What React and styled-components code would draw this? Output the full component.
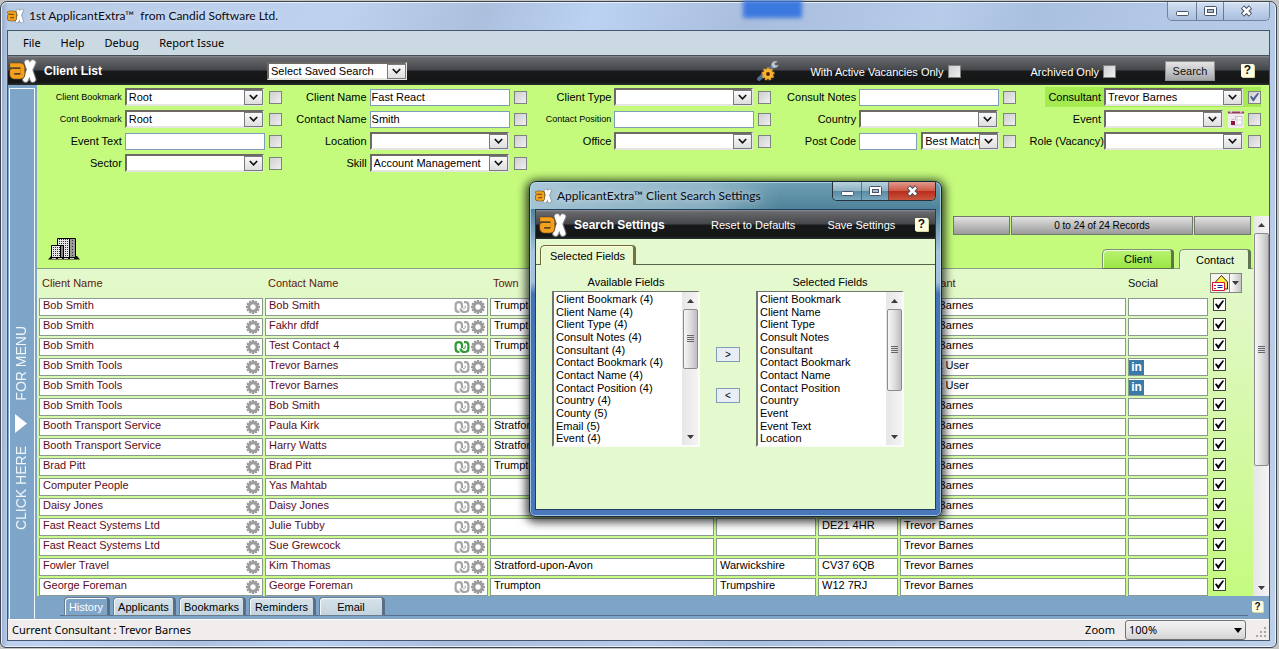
import React from "react";
import styled, { createGlobalStyle, css } from "styled-components";

const GlobalStyle = createGlobalStyle`
  *, *::before, *::after { box-sizing: border-box; }
  body {
    margin: 0;
    background: #c3c5c4;
    font-family: "Liberation Sans", Arial, sans-serif;
    font-size: 11px;
    line-height: 14px;
    color: #000;
  }
  button, input, select { font: inherit; color: inherit; margin: 0; }
`;

const uiFont = css`
  font-family: "Noto Sans", "Open Sans", sans-serif;
  font-size: 11px;
`;

const Desktop = styled.div`
  position: relative;
  height: 100vh;
  padding: 1px 2px 1px 0;
  overflow: hidden;
`;

const AppWindow = styled.div`
  height: 100%;
  display: flex;
  flex-direction: column;
  padding: 0 6px 6px;
  border: 1px solid #3f4650;
  border-radius: 7px 7px 6px 6px;
  box-shadow: inset 0 0 0 1px #e6effa;
  background:
    linear-gradient(90deg, rgba(64, 84, 130, 0.25) 1px, transparent 7px),
    linear-gradient(115deg, #b7cbe6 0, #bed2f0 22%, #acc0de 31%, #bcd2f2 38%, #a9bddd 48%, #b6cce9 60%, #aac0df 66%, #b3c8e6 74%, #bdd0ea 100%);
`;

const TitleBar = styled.header`
  position: relative;
  display: flex;
  align-items: center;
  flex: none;
  height: ${(p) => p.$height}px;
  gap: 5px;
`;

const TitleText = styled.h1`
  margin: 0;
  font-family: Lato, "Open Sans", sans-serif;
  font-size: 12px;
  line-height: 18px;
  font-weight: 400;
  color: #0a0a14;
  white-space: pre;
  text-shadow: 0 0 6px rgba(255, 255, 255, 0.8);
`;

const TitleGlow = styled.div`
  position: absolute;
  left: 736px;
  top: -2px;
  width: 59px;
  height: 18px;
  background: #3c79de;
  filter: blur(2px);
`;

const CaptionGroup = styled.div`
  display: flex;
  align-self: flex-start;
  margin-left: auto;
  height: 19px;
  border: 1px solid ${(p) => (p.$dark ? "#26313d" : "#74839a")};
  border-top: 0;
  border-radius: 0 0 5px 5px;
  overflow: hidden;
`;

const CaptionButton = styled.button`
  display: flex;
  align-items: center;
  justify-content: center;
  width: ${(p) => p.$width}px;
  padding: 0;
  border: 0;
  border-left: ${(p) => (p.$first ? "0" : "1px solid rgba(50, 65, 90, 0.6)")};
  background: ${(p) =>
    p.$kind === "close"
      ? "linear-gradient(#dd9a8c, #cf5a48 48%, #b92d1b 52%, #c9543c)"
      : p.$kind === "teal"
        ? "linear-gradient(#b9d2de, #8fb3c4 48%, #5c8ca5 52%, #78a8bd)"
        : "linear-gradient(rgba(235,242,252,.6), rgba(200,216,236,.5) 48%, rgba(160,182,214,.5))"};
`;

const Client = styled.div`
  flex: 1;
  min-height: 0;
  display: flex;
  flex-direction: column;
  border: 1px solid #46566e;
  background: #fff;
`;

const MenuBar = styled.nav`
  ${uiFont}
  display: flex;
  align-items: center;
  flex: none;
  height: 25px;
  gap: 20px;
  padding-left: 15px;
  background: #cbd9e2;
  border-bottom: 1px solid #4a5058;
`;

const MenuItem = styled.button`
  padding: 0;
  border: 0;
  background: none;
  line-height: 18px;
`;

const BlackBar = styled.div`
  display: flex;
  align-items: center;
  flex: none;
  height: 29px;
  padding: 0 ${(p) => p.$end}px 0 ${(p) => p.$start || 0}px;
  color: #fff;
  background: linear-gradient(#8b8c90 0, #66686c 2px, #45474b 48%, #17191b 52%, #141616 90%, #2c3030);
`;

const BarTitle = styled.h2`
  margin: 0 0 0 6px;
  width: ${(p) => p.$width}px;
  font-size: 12px;
  line-height: 14px;
  font-weight: 700;
`;

const Spacer = styled.div`
  flex: ${(p) => (p.$size ? `0 0 ${p.$size}px` : 1)};
`;

const IconButton = styled.button`
  display: flex;
  padding: 0;
  border: 0;
  background: none;
`;

const BarCheck = styled.label`
  display: flex;
  align-items: center;
  gap: 4px;
  padding-top: 2px;
  margin-right: ${(p) => p.$after}px;
`;

const SearchButton = styled.button`
  width: 50px;
  height: 20px;
  padding: 0;
  border: 1px solid #8f9192;
  color: #111;
  background: linear-gradient(#e4e4e4, #c6c7c8 50%, #a4a5a6);
`;

const Box = styled.input.attrs({ type: "checkbox" })`
  appearance: none;
  display: block;
  flex: none;
  width: 13px;
  height: 13px;
  border: 1px solid ${(p) => (p.$strong ? "#3d443a" : "#7d8480")};
  background: ${(p) => (p.$strong ? "#fff" : "linear-gradient(135deg, #cfcfd2, #efefef)")};

  &:checked::before {
    content: "";
    display: block;
    width: 9px;
    height: 9px;
    margin: 1px;
    background: ${(p) => (p.$strong ? "#080810" : "#4a5f97")};
    clip-path: polygon(0 48%, 14% 36%, 36% 62%, 88% 0, 100% 10%, 40% 100%, 30% 94%);
  }
`;

const ComboWrap = styled.span`
  position: relative;
  display: block;
  flex: none;
  width: ${(p) => p.$width || 139}px;
  height: 18px;
`;

const ComboSelect = styled.select`
  appearance: none;
  display: block;
  width: 100%;
  height: 18px;
  padding: 0 18px 0 2px;
  border: 2px solid;
  border-color: #6d6a66 #e6e6e0 #e6e6e0 #6d6a66;
  border-radius: 0;
  color: #000;
  background: #fff;
  line-height: 14px;
`;

const ComboArrow = styled.span`
  position: absolute;
  top: 2px;
  right: 1px;
  display: flex;
  align-items: center;
  justify-content: center;
  width: 19px;
  height: 15px;
  border: 1px solid #777b80;
  background: linear-gradient(#fafafa, #dedede);
  pointer-events: none;
`;

const Workspace = styled.div`
  flex: 1;
  min-height: 0;
  display: flex;
`;

const SideStrip = styled.aside`
  flex: none;
  width: 29px;
  padding: 3px 2px 0 1px;
  background: #7ea5c7;
`;

const SideButton = styled.button`
  display: flex;
  flex-direction: column;
  align-items: center;
  justify-content: center;
  gap: 13px;
  width: 100%;
  height: 100%;
  padding: 148px 3px 0 0;
  border: 1px solid #f2f7fb;
  border-bottom: 0;
  background: #7ea5c7;
  color: #eef5fb;
`;

const SideText = styled.span`
  writing-mode: vertical-rl;
  transform: rotate(180deg);
  font-size: 14px;
  line-height: 16px;
`;

const Pane = styled.main`
  flex: 1;
  min-width: 0;
  display: flex;
  flex-direction: column;
  background: #c4fb7d;
`;

const SearchForm = styled.form`
  display: grid;
  grid-template-columns: repeat(5, 1fr);
  align-items: start;
  flex: none;
  height: 131px;
  padding: 2px 8px 0 0;
`;

const FormColumn = styled.div`
  display: flex;
  flex-direction: column;
  gap: 2px;
`;

const FieldRow = styled.div`
  display: flex;
  align-items: center;
  justify-content: flex-end;
  height: 20px;
`;

const FieldLabel = styled.label`
  margin-right: ${(p) => (p.$tight ? 0 : 3)}px;
  font-size: ${(p) => (p.$small ? 9 : 11)}px;
  white-space: nowrap;
`;

const FieldSlot = styled.div`
  display: flex;
  align-items: center;
  justify-content: space-between;
  width: 140px;
  margin-right: 4px;
`;

const Highlight = styled.div`
  display: flex;
  align-items: center;
  align-self: flex-end;
  height: 20px;
  padding-left: 3px;
  background: #a4ea50;
`;

const TextField = styled.input`
  width: ${(p) => p.$width || 140}px;
  height: 17px;
  padding: 0 1px;
  border: 1px solid #7f9db9;
  background: #fff;
`;

const Body = styled.div`
  flex: 1;
  min-height: 0;
  display: flex;
`;

const ListArea = styled.section`
  flex: 1;
  min-width: 0;
  display: flex;
  flex-direction: column;
`;

const ListTools = styled.div`
  display: flex;
  justify-content: space-between;
  flex: none;
  height: 53px;
  padding: 0 2px 0 11px;
  border-bottom: 1px solid #8c9d86;
`;

const BuildingSlot = styled.div`
  align-self: flex-end;
  padding-bottom: 8px;
  line-height: 0;
`;

const ToolsRight = styled.div`
  display: flex;
  flex-direction: column;
  justify-content: space-between;
  align-items: flex-end;
`;

const RecordNav = styled.div`
  display: flex;
  gap: 1px;
`;

const RecordButton = styled.button`
  width: ${(p) => p.$width}px;
  height: 19px;
  padding: 0;
  border: 1px solid #6f7a68;
  font-size: 10px;
  background: linear-gradient(#e2e2e2, #bdbdbd 50%, #9b9b9b);
`;

const Tabs = styled.div`
  display: flex;
  gap: 5px;
`;

const ListTab = styled.button`
  width: 72px;
  height: 20px;
  margin-bottom: -1px;
  padding: 0 0 0 2px;
  border: 1px solid #7d8f74;
  border-right: 3px solid #5f7452;
  border-bottom: ${(p) => (p.$active ? "0" : "1px solid #5f7452")};
  border-radius: 5px 4px 0 0;
  background: ${(p) => (p.$active ? "#e3f9cb" : "linear-gradient(#b9f373, #9be644)")};
  box-shadow: inset 1px 1px 0 #eefbe0;
`;

const TableClip = styled.div`
  flex: 1;
  min-height: 0;
  overflow: hidden;
  background: linear-gradient(#e3f9cc, #e0f8c4 40px, #c5fb80);
`;

const DataTable = styled.table`
  width: 100%;
  table-layout: fixed;
  border-collapse: separate;
  border-spacing: 2px;
`;

const HeadCell = styled.th`
  width: ${(p) => (p.$width ? p.$width + "px" : "auto")};
  height: 25px;
  padding: 0 0 2px ${(p) => (p.$plain ? 0 : 3)}px;
  text-align: left;
  font-weight: 400;
  color: ${(p) => (p.$plain ? "#111" : "#60170f")};
`;

const IconHead = styled.th`
  width: 41px;
  padding: 0 0 2px;
`;

const MailMenu = styled.button`
  display: flex;
  align-items: center;
  width: 32px;
  height: 20px;
  padding: 0;
  border: 1px solid #85877c;
  background: #f4f4ec;
`;

const MailArrow = styled.span`
  display: flex;
  align-items: center;
  justify-content: center;
  width: 12px;
  height: 18px;
  border-left: 1px solid #85877c;
  background: linear-gradient(90deg, #fff, #c4c4c4);
`;

const Cell = styled.td`
  height: 18px;
  padding: 0;
  border: 1px solid #8b9a91;
  background: #fff;
  color: ${(p) => (p.$link ? "#5b0b22" : "#000")};
`;

const CellLine = styled.div`
  display: flex;
  align-items: flex-start;
  height: 16px;
  padding: 0 1px 0 3px;
  white-space: nowrap;
`;

const CellText = styled.span`
  flex: 1;
  overflow: hidden;
  height: 14px;
  line-height: 12px;
`;

const CheckCell = styled.td`
  padding: 0 0 0 3px;
  vertical-align: top;
`;

const LinkedIn = styled.a`
  display: block;
  width: 15px;
  height: 15px;
  margin-top: 1px;
  background: #3a7aa8;
  color: #fff;
  font-size: 12px;
  line-height: 15px;
  font-weight: 700;
  text-align: center;
  text-decoration: none;
`;

const Track = styled.div`
  flex: none;
  display: flex;
  flex-direction: column;
  align-items: center;
  width: ${(p) => p.$width}px;
  background: linear-gradient(90deg, #e6e6e6, #f4f4f4);
`;

const TrackEnd = styled.span`
  display: flex;
  align-items: center;
  justify-content: center;
  flex: none;
  width: 100%;
  height: 17px;
`;

const Thumb = styled.span`
  display: flex;
  align-items: center;
  justify-content: center;
  width: calc(100% - 1px);
  height: ${(p) => p.$size};
  margin-bottom: auto;
  border: 1px solid #8c8c90;
  border-radius: 2px;
  background: linear-gradient(90deg, #f6f6f6, #dededf 50%, #bdbdc2);
`;

const BottomBar = styled.div`
  flex: none;
  height: 23px;
  display: flex;
  align-items: flex-start;
  padding-right: 6px;
  background: #7ea5c7;
`;

const BottomTabs = styled.div`
  flex: 1;
  display: flex;
  gap: 3px;
  height: 20px;
  margin: 0 4px 0 23px;
  padding: 1px 0 0 4px;
  border-bottom: 1px solid #55708c;
`;

const BottomTab = styled.button`
  width: ${(p) => p.$width}px;
  height: 19px;
  padding: 1px 0 0;
  border: 1px solid #6a7c8e;
  border-right: 3px solid #5b6f84;
  border-radius: 4px 4px 0 0;
  box-shadow: inset 1px 1px 0 #f2f7fa;
  color: ${(p) => (p.$active ? "#fff" : "#000")};
  background: ${(p) => (p.$active ? "#7ea5c7" : "linear-gradient(#d7e3ea, #c3d3de)")};
`;

const HelpSlot = styled.div`
  padding-top: 5px;
`;

const StatusBar = styled.footer`
  ${uiFont}
  flex: none;
  display: flex;
  align-items: center;
  height: 21px;
  padding: 0 2px 0 4px;
  border-top: 1px solid #fff;
  background: #f0edec;
`;

const ZoomLabel = styled.label`
  margin-left: auto;
  margin-right: 10px;
`;

const ZoomSelect = styled.select`
  appearance: none;
  width: 121px;
  height: 20px;
  padding: 0 3px;
  border: 1px solid #6f7276;
  border-radius: 3px;
  background: linear-gradient(#f3f3f3, #e6e6e6 50%, #d3d3d3);
`;

const ZoomWrap = styled.span`
  position: relative;
  display: block;
  margin-right: 10px;
`;

const ZoomArrow = styled.svg`
  position: absolute;
  right: 4px;
  top: 8px;
  pointer-events: none;
`;

const Grip = styled.svg`
  align-self: flex-end;
  margin-bottom: 2px;
`;

/* Floating settings window */

const Dialog = styled.section`
  position: absolute;
  left: 529px;
  top: 181px;
  width: 413px;
  height: 336px;
  display: flex;
  flex-direction: column;
  padding: 0 5px 6px;
  border: 1px solid #16263a;
  border-radius: 7px 7px 6px 6px;
  box-shadow:
    inset 0 0 0 1px rgba(190, 225, 240, 0.75),
    0 2px 10px 3px rgba(0, 0, 0, 0.75);
  background:
    linear-gradient(90deg, rgba(190, 215, 228, 0.75) 0, rgba(170, 200, 215, 0.6) 180px, transparent 250px) 0 0 / 100% 27px no-repeat,
    linear-gradient(#6f9fb4 0, #4f8399 27px, #a9c4dc 70px, #a3bfe0 100px, #4572b4 112px, #4a78ba 100%);
`;

const DialogBody = styled.div`
  flex: 1;
  display: flex;
  flex-direction: column;
  border: 1px solid #1d3f62;
  background: #e4f9cd;
`;

const BarLink = styled.button`
  padding: 0;
  border: 0;
  background: none;
  margin-right: ${(p) => p.$after}px;
`;

const DialogTabs = styled.div`
  display: flex;
  flex: none;
  height: 26px;
  padding: 6px 0 0 4px;
  border-bottom: 1px solid #56654c;
`;

const DialogTab = styled.button`
  height: 20px;
  width: 96px;
  padding: 1px 0 0 1px;
  border: 1px solid #6d6a35;
  border-right: 3px solid #77733f;
  border-bottom: 0;
  border-radius: 5px 4px 0 0;
  box-shadow: inset 1px 1px 0 #fffbe0;
  background: #e8f9cd;
`;

const Picker = styled.div`
  display: flex;
  align-items: flex-start;
  justify-content: center;
  gap: 16px;
  padding: 10px 15px 0 0;
`;

const PickerColumn = styled.div`
  display: flex;
  flex-direction: column;
  align-items: center;
  gap: 2px;
`;

const ListBox = styled.div`
  display: flex;
  width: 148px;
  height: 156px;
  border: 2px solid;
  border-color: #6f756c #fbfcf8 #fbfcf8 #6f756c;
  border-top-width: 1px;
  background: #fff;
`;

const ListSelect = styled.select`
  flex: 1;
  min-width: 0;
  height: 100%;
  padding: 1px 0 0;
  border: 0;
  border-radius: 0;
  overflow: hidden;
  scrollbar-width: none;
  background: #fff;

  option {
    height: 13px;
    min-height: 0;
    padding: 0 2px;
    line-height: 13px;
  }
  option:nth-child(3n + 2) {
    height: 12px;
  }
`;

const MoveButtons = styled.div`
  display: flex;
  flex-direction: column;
  gap: 26px;
  padding-top: 72px;
`;

const MoveButton = styled.button`
  width: 24px;
  height: 15px;
  padding: 0;
  border: 1px solid #7f9db9;
  font-size: 10px;
  line-height: 12px;
  background: #e9eef4;
`;

function Logo({ width, height }) {
  return (
    <svg width={width} height={height} viewBox="0 0 27 25" aria-hidden="true">
      <g fill="none" strokeLinecap="round" strokeLinejoin="round">
        <path d="M17.500 4.500L23 20.500M23 4.500Q19.500 12 16 20.500" stroke="#85898e" strokeWidth="7" opacity=".8" />
        <path d="M17.500 4.500L23 20.500M23 4.500Q19.500 12 16 20.500" stroke="#fff" strokeWidth="4.800" />
        <path d="M3 7H10.500Q13 7 13 9.500V15.500Q13 18 10.500 18H5.500Q3 18 3 15.500V12.500H9" stroke="#5a4526" strokeWidth="5.500" />
        <path d="M3 7H10.500Q13 7 13 9.500V15.500Q13 18 10.500 18H5.500Q3 18 3 15.500V12.500H9" stroke="#f5a11c" strokeWidth="3.800" strokeLinecap="square" />
      </g>
    </svg>
  );
}

function Chevron() {
  return (
    <svg width="9" height="7" viewBox="0 0 9 7" aria-hidden="true">
      <path d="M.8 1L4.500 4.800 8.200 1" fill="none" stroke="#111" strokeWidth="1.700" />
    </svg>
  );
}

function Triangle({ up }) {
  return (
    <svg width="7" height="4" viewBox="0 0 7 4" aria-hidden="true">
      <path d={up ? "M0 4L3.500 0 7 4Z" : "M0 0H7L3.500 4Z"} fill="#3c3c40" />
    </svg>
  );
}

function Lines() {
  return (
    <svg width="7" height="8" viewBox="0 0 7 8" aria-hidden="true">
      <path d="M0 .5H7M0 2.500H7M0 4.500H7M0 6.500H7" stroke="#66666b" />
    </svg>
  );
}

function Scrollbar({ width, size }) {
  return (
    <Track $width={width} aria-hidden="true">
      <TrackEnd><Triangle up /></TrackEnd>
      <Thumb $size={size}><Lines /></Thumb>
      <TrackEnd><Triangle /></TrackEnd>
    </Track>
  );
}

function GearIcon() {
  const teeth = Array.from({ length: 12 }, (_, i) => i * 30);
  return (
    <svg width="16" height="16" viewBox="0 0 16 16" aria-hidden="true">
      {teeth.map((a) => (
        <rect key={a} x="6.900" y="1" width="2.200" height="3" fill="#9a9a9a" transform={`rotate(${a} 8 8)`} />
      ))}
      <circle cx="8" cy="8" r="4.200" fill="none" stroke="#9c9c9c" strokeWidth="3" />
    </svg>
  );
}

function ChainIcon({ on }) {
  const color = on ? "#2f9a35" : "#a6a6a6";
  return (
    <svg width="16" height="16" viewBox="0 0 16 16" aria-hidden="true">
      <g fill="none" stroke={color} strokeWidth="2.200">
        <path d="M5.500 13H5Q1.600 13 1.600 9.500V6.500Q1.600 3.200 4.800 3.200Q8 3.200 8 6.200V9" />
        <path d="M6.500 9.500Q7 13 10.500 13Q14.400 13 14.400 9.500V6.500Q14.400 3.200 11.500 3.200H10" />
        <path d="M11.300 6.500V8Q11.300 9.800 9 9.800" strokeWidth="1" />
      </g>
    </svg>
  );
}

function WrenchGear() {
  const teeth = Array.from({ length: 9 }, (_, i) => i * 40);
  return (
    <svg width="23" height="22" viewBox="0 0 23 22" aria-hidden="true">
      <path d="M2 19L16 6" stroke="#4f6e9c" strokeWidth="4" strokeLinecap="round" />
      <path d="M20.500 1.500Q16 0 14.500 4Q14 7 17 8Q20 8.500 21.500 5L18.500 5.500 17.500 3.500Z" fill="#c3cbd2" stroke="#8a929a" strokeWidth=".6" />
      {teeth.map((a) => (
        <rect key={a} x="9.700" y="7.500" width="2.600" height="3.500" fill="#e39a1d" transform={`rotate(${a} 11 14)`} />
      ))}
      <circle cx="11" cy="14" r="5" fill="#f2b535" />
      <circle cx="11" cy="14" r="1.900" fill="#5b1b10" />
    </svg>
  );
}

const HelpBadge = styled.button`
  display: block;
  width: ${(p) => p.$size}px;
  height: ${(p) => p.$size}px;
  padding: 0;
  border: 0;
  border-radius: 1px;
  font-size: ${(p) => p.$size - 1}px;
  line-height: ${(p) => p.$size}px;
  font-weight: 700;
  text-align: center;
  color: #101022;
  background: #fffde0;
  box-shadow: 1px 1px 0 #d9d8a0;
`;

function Building() {
  return (
    <svg width="32" height="22" viewBox="0 0 32 22" aria-hidden="true">
      <defs>
        <pattern id="panes" width="2" height="2" patternUnits="userSpaceOnUse">
          <rect width="2" height="2" fill="#e8e8e8" />
          <rect width="1" height="1" x="1" y="1" fill="#333" />
        </pattern>
      </defs>
      <path d="M0 21.500L3 18H29L32 21.500Z" fill="#111" />
      <path d="M9.500 .5H21.500V19.500H9.500Z" fill="url(#panes)" stroke="#000" />
      <path d="M21.500 .5H27.500V19.500H21.500Z" fill="#9b9b9b" stroke="#000" />
      <path d="M3.500 7.500H12.500V19.500H3.500Z" fill="url(#panes)" stroke="#000" />
      <path d="M12.500 7.500H15.500V19.500H12.500Z" fill="#888" stroke="#000" />
      <path d="M24.500 2V18" stroke="#333" strokeDasharray="1 2" />
      <path d="M4 20.500H28" stroke="#ccc" strokeDasharray="4 2" />
    </svg>
  );
}

function MailIcon() {
  return (
    <svg width="18" height="18" viewBox="0 0 18 18" aria-hidden="true">
      <path d="M4.500 8L10.500 1.500 16.500 8V15H4.500Z" fill="#fff04a" stroke="#2b2410" />
      <path d="M1.500 8.500H13.500V16.500H1.500Z" fill="#fff" stroke="#d3162c" />
      <path d="M6.500 11.500H11.500M6.500 13.500H11.500" stroke="#1a1fa8" />
      <path d="M3 11.500H5M3 14.500H5" stroke="#d3162c" />
    </svg>
  );
}

function Captions({ dialog }) {
  const kind = dialog ? "teal" : "plain";
  return (
    <CaptionGroup $dark={dialog}>
      <CaptionButton $width={28} $first $kind={kind} aria-label="Minimise">
        <svg width="13" height="11" viewBox="0 0 13 11"><rect x=".5" y="5.500" width="12" height="4" rx="1" fill="#fff" stroke="#49556a" /></svg>
      </CaptionButton>
      <CaptionButton $width={27} $kind={kind} aria-label="Maximise">
        <svg width="13" height="11" viewBox="0 0 13 11">
          <rect x=".5" y=".5" width="12" height="9" rx="1" fill="#fff" stroke="#49556a" />
          <rect x="3.500" y="3.500" width="6" height="3" fill="#a9bdd0" stroke="#49556a" />
        </svg>
      </CaptionButton>
      <CaptionButton $width={dialog ? 47 : 46} $kind={dialog ? "close" : "plain"} aria-label="Close">
        <svg width="13" height="12" viewBox="0 0 13 12">
          <path d="M2.500 2L10.500 10M10.500 2L2.500 10" stroke="#4a4f60" strokeWidth="4.600" />
          <path d="M3 2.500L10 9.500M10 2.500L3 9.500" stroke="#fff" strokeWidth="2.600" />
        </svg>
      </CaptionButton>
    </CaptionGroup>
  );
}

function Combo({ id, value = "", width, label }) {
  return (
    <ComboWrap $width={width}>
      <ComboSelect id={id} defaultValue={value} aria-label={label}>
        <option>{value}</option>
      </ComboSelect>
      <ComboArrow><Chevron /></ComboArrow>
    </ComboWrap>
  );
}

function CalendarIcon() {
  return (
    <svg width="16" height="17" viewBox="0 0 16 17" aria-hidden="true">
      <rect width="16" height="17" fill="#f0ecee" />
      <path d="M0 1.500H16" stroke="#8d3b5c" strokeWidth="2" />
      <path d="M2 1H4M12 1H14" stroke="#fff" />
      <path d="M7.500 5.500H14V14H4V8.500H7.500Z" fill="#fff" stroke="#c9bfc6" />
      <path d="M9 6V13M6 9H13" stroke="#d9d0d6" />
      <rect x="3" y="10" width="4" height="4" fill="#8b1743" />
    </svg>
  );
}

const columns = [
  [
    { label: "Client Bookmark", small: true, combo: true, value: "Root" },
    { label: "Cont Bookmark", small: true, combo: true, value: "Root" },
    { label: "Event Text" },
    { label: "Sector", combo: true },
  ],
  [
    { label: "Client Name", value: "Fast React" },
    { label: "Contact Name", value: "Smith" },
    { label: "Location", combo: true },
    { label: "Skill", combo: true, value: "Account Management" },
  ],
  [
    { label: "Client Type", combo: true },
    { label: "Contact Position", small: true },
    { label: "Office", combo: true },
  ],
  [
    { label: "Consult Notes" },
    { label: "Country", combo: true },
    { label: "Post Code", match: true },
  ],
  [
    { label: "Consultant", combo: true, value: "Trevor Barnes", on: true },
    { label: "Event", combo: true, calendar: true },
    { label: "Role (Vacancy)", combo: true, tight: true },
  ],
];

function Field({ f }) {
  const id = f.label.toLowerCase().replace(/[^a-z]+/g, "-");
  const parts = (
    <>
      <FieldLabel htmlFor={id} $small={f.small} $tight={f.tight}>{f.label}</FieldLabel>
      <FieldSlot>
        {f.match ? (
          <>
            <TextField id={id} $width={58} />
            <Combo value="Best Match" width={78} label="Post code match" />
          </>
        ) : f.combo ? (
          <Combo id={id} value={f.value} width={f.calendar ? 119 : 139} />
        ) : (
          <TextField id={id} defaultValue={f.value} />
        )}
        {f.calendar && <IconButton type="button" aria-label="Pick date"><CalendarIcon /></IconButton>}
      </FieldSlot>
      <Box defaultChecked={f.on} aria-label={`Use ${f.label}`} />
    </>
  );
  return f.on ? <Highlight>{parts}</Highlight> : <FieldRow>{parts}</FieldRow>;
}

const T = "Trevor Barnes";
const U = "Support User";
const S = "Stratford-upon-Avon";
const rows = [
  ["Bob Smith", "Bob Smith", "Trumpton", "", "", T],
  ["Bob Smith", "Fakhr dfdf", "Trumpton", "", "", T],
  ["Bob Smith", "Test Contact 4", "Trumpton", "", "", T],
  ["Bob Smith Tools", "Trevor Barnes", "", "", "", U],
  ["Bob Smith Tools", "Trevor Barnes", "", "", "", U],
  ["Bob Smith Tools", "Bob Smith", "", "", "", T],
  ["Booth Transport Service", "Paula Kirk", S, "", "", T],
  ["Booth Transport Service", "Harry Watts", S, "", "", T],
  ["Brad Pitt", "Brad Pitt", "Trumpton", "", "", T],
  ["Computer People", "Yas Mahtab", "", "", "", T],
  ["Daisy Jones", "Daisy Jones", "", "", "", T],
  ["Fast React Systems Ltd", "Julie Tubby", "", "", "DE21 4HR", T],
  ["Fast React Systems Ltd", "Sue Grewcock", "", "", "", T],
  ["Fowler Travel", "Kim Thomas", S, "Warwickshire", "CV37 6QB", T],
  ["George Foreman", "George Foreman", "Trumpton", "Trumpshire", "W12 7RJ", T],
];

function Row({ row, index }) {
  const [client, contact, ...rest] = row;
  return (
    <tr>
      <Cell $link><CellLine><CellText>{client}</CellText><GearIcon /></CellLine></Cell>
      <Cell $link>
        <CellLine>
          <CellText>{contact}</CellText>
          <ChainIcon on={index === 2} />
          <GearIcon />
        </CellLine>
      </Cell>
      {rest.map((value, i) => (
        <Cell key={i}><CellLine><CellText>{value}</CellText></CellLine></Cell>
      ))}
      <Cell>{(index === 3 || index === 4) && <LinkedIn href="#linkedin">in</LinkedIn>}</Cell>
      <CheckCell><Box $strong defaultChecked aria-label={`Select ${contact}`} /></CheckCell>
    </tr>
  );
}

const selectedFields = [
  "Client Bookmark", "Client Name", "Client Type", "Consult Notes", "Consultant", "Contact Bookmark",
  "Contact Name", "Contact Position", "Country", "Event", "Event Text", "Location",
];
const availableFields = [
  "Client Bookmark (4)", "Client Name (4)", "Client Type (4)", "Consult Notes (4)", "Consultant (4)",
  "Contact Bookmark (4)", "Contact Name (4)", "Contact Position (4)", "Country (4)", "County (5)",
  "Email (5)", "Event (4)",
];

function FieldList({ id, title, items, size }) {
  return (
    <PickerColumn>
      <label htmlFor={id}>{title}</label>
      <ListBox>
        <ListSelect id={id} multiple size={12}>
          {items.map((item) => <option key={item}>{item}</option>)}
        </ListSelect>
        <Scrollbar width={16} size={size} />
      </ListBox>
    </PickerColumn>
  );
}

function SettingsDialog() {
  return (
    <Dialog role="dialog" aria-label="Client Search Settings">
      <TitleBar $height={27}>
        <Logo width={17} height={16} />
        <TitleText as="h2">ApplicantExtra™ Client Search Settings</TitleText>
        <Captions dialog />
      </TitleBar>
      <DialogBody>
        <BlackBar $start={2} $end={7}>
          <Logo width={30} height={26} />
          <BarTitle as="h3" $width={137}>Search Settings</BarTitle>
          <BarLink $after={32}>Reset to Defaults</BarLink>
          <BarLink $after={0}>Save Settings</BarLink>
          <Spacer />
          <HelpBadge $size={13} aria-label="Help">?</HelpBadge>
        </BlackBar>
        <DialogTabs><DialogTab>Selected Fields</DialogTab></DialogTabs>
        <Picker>
          <FieldList id="available" title="Available Fields" items={availableFields} size="60px" />
          <MoveButtons>
            <MoveButton aria-label="Add field">&gt;</MoveButton>
            <MoveButton aria-label="Remove field">&lt;</MoveButton>
          </MoveButtons>
          <FieldList id="selected" title="Selected Fields" items={selectedFields} size="82px" />
        </Picker>
      </DialogBody>
    </Dialog>
  );
}

export default function App() {
  return (
    <Desktop>
      <GlobalStyle />
      <AppWindow>
        <TitleBar $height={28}>
          <TitleGlow />
          <Logo width={17} height={16} />
          <TitleText>{"1st ApplicantExtra™  from Candid Software Ltd."}</TitleText>
          <Captions />
        </TitleBar>
        <Client>
          <MenuBar>
            {["File", "Help", "Debug", "Report Issue"].map((m) => <MenuItem key={m}>{m}</MenuItem>)}
          </MenuBar>
          <BlackBar $end={15}>
            <Logo width={30} height={26} />
            <BarTitle $width={223}>Client List</BarTitle>
            <Combo value="Select Saved Search" width={140} label="Saved search" />
            <Spacer />
            <IconButton aria-label="Search settings"><WrenchGear /></IconButton>
            <Spacer $size={30} />
            <BarCheck $after={70}>With Active Vacancies Only <Box /></BarCheck>
            <BarCheck $after={49}>Archived Only <Box /></BarCheck>
            <SearchButton>Search</SearchButton>
            <Spacer $size={26} />
            <HelpBadge $size={13} aria-label="Help">?</HelpBadge>
          </BlackBar>
          <Workspace>
            <SideStrip>
              <SideButton>
                <SideText>FOR MENU</SideText>
                <svg width="12" height="19" viewBox="0 0 12 19" aria-hidden="true"><path d="M0 0L12 9.500 0 19Z" fill="#fff" /></svg>
                <SideText>CLICK HERE</SideText>
              </SideButton>
            </SideStrip>
            <Pane>
              <SearchForm>
                {columns.map((fields, i) => (
                  <FormColumn key={i}>{fields.map((f) => <Field key={f.label} f={f} />)}</FormColumn>
                ))}
              </SearchForm>
              <Body>
                <ListArea>
                  <ListTools>
                    <BuildingSlot><Building /></BuildingSlot>
                    <ToolsRight>
                      <RecordNav>
                        <RecordButton $width={57} aria-label="Previous records" />
                        <RecordButton $width={182}>0 to 24 of 24 Records</RecordButton>
                        <RecordButton $width={57} aria-label="Next records" />
                      </RecordNav>
                      <Tabs>
                        <ListTab>Client</ListTab>
                        <ListTab $active>Contact</ListTab>
                      </Tabs>
                    </ToolsRight>
                  </ListTools>
                  <TableClip>
                    <DataTable>
                      <thead>
                        <tr>
                          <HeadCell $width={224}>Client Name</HeadCell>
                          <HeadCell $width={223}>Contact Name</HeadCell>
                          <HeadCell $width={224}>Town</HeadCell>
                          <HeadCell $width={100} aria-label="County" />
                          <HeadCell $width={80} aria-label="Post Code" />
                          <HeadCell>Consultant</HeadCell>
                          <HeadCell $width={80} $plain>Social</HeadCell>
                          <IconHead>
                            <MailMenu aria-label="Email selected">
                              <MailIcon />
                              <MailArrow><Triangle /></MailArrow>
                            </MailMenu>
                          </IconHead>
                        </tr>
                      </thead>
                      <tbody>
                        {rows.map((row, i) => <Row key={i} row={row} index={i} />)}
                      </tbody>
                    </DataTable>
                  </TableClip>
                </ListArea>
                <Scrollbar width={16} size="233px" />
              </Body>
              <BottomBar>
                <BottomTabs>
                  <BottomTab $width={46} $active>History</BottomTab>
                  <BottomTab $width={63}>Applicants</BottomTab>
                  <BottomTab $width={67}>Bookmarks</BottomTab>
                  <BottomTab $width={67}>Reminders</BottomTab>
                  <BottomTab $width={66}>Email</BottomTab>
                </BottomTabs>
                <HelpSlot><HelpBadge $size={11} aria-label="Help">?</HelpBadge></HelpSlot>
              </BottomBar>
            </Pane>
          </Workspace>
          <StatusBar>
            <span>Current Consultant : Trevor Barnes</span>
            <ZoomLabel htmlFor="zoom">Zoom</ZoomLabel>
            <ZoomWrap>
              <ZoomSelect id="zoom"><option>100%</option></ZoomSelect>
              <ZoomArrow width="8" height="5" viewBox="0 0 8 5"><path d="M0 0H8L4 5Z" fill="#000" /></ZoomArrow>
            </ZoomWrap>
            <Grip width="11" height="11" viewBox="0 0 11 11" aria-hidden="true">
              <path d="M8 0H10V2H8ZM8 4H10V6H8ZM8 8H10V10H8ZM4 4H6V6H4ZM4 8H6V10H4ZM0 8H2V10H0Z" fill="#a9a6a6" />
            </Grip>
          </StatusBar>
        </Client>
      </AppWindow>
      <SettingsDialog />
    </Desktop>
  );
}
